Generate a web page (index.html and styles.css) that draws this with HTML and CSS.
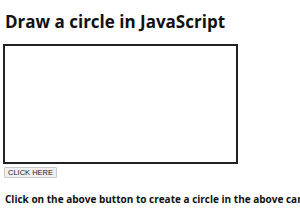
FILE: index.html
```html
<!DOCTYPE html>
<html>
<head>
<meta charset="utf-8">
<link rel="stylesheet" href="styles.css">
</head>
<body>
<h1 class="title">Draw a circle in JavaScript</h1>
<div class="canvas"></div>
<button class="btn">CLICK HERE</button>
<p class="note">Click on the above button to create a circle in the above canvas element.</p>
</body>
</html>
```
FILE: styles.css
```css
html, body {
  margin: 0;
  padding: 0;
  background: #fff;
  overflow: hidden;
}
body {
  padding: 0 0 0 3px;
  font-family: "Open Sans", "Liberation Sans", sans-serif;
  color: #111;
  width: 300px;
}
.title {
  font-size: 17px;
  font-weight: 700;
  margin: 10px 0 0 2px;
  line-height: 23px;
  white-space: nowrap;
}
.canvas {
  margin-top: 11px;
  width: 231px;
  height: 116px;
  border: 2px solid #222;
}
.btn {
  display: block;
  margin: 3px 0 0 1px;
  padding: 0 3px;
  height: 11px;
  font-family: "Liberation Sans", Arial, sans-serif;
  font-size: 7.5px;
  line-height: 9px;
  color: #222;
  background: #f0f0f0;
  border: 1px solid #c8c8c8;
  border-radius: 1px;
}
.note {
  margin: 14px 0 0 2px;
  font-size: 10px;
  font-weight: 700;
  line-height: 14px;
  white-space: nowrap;
}
```
